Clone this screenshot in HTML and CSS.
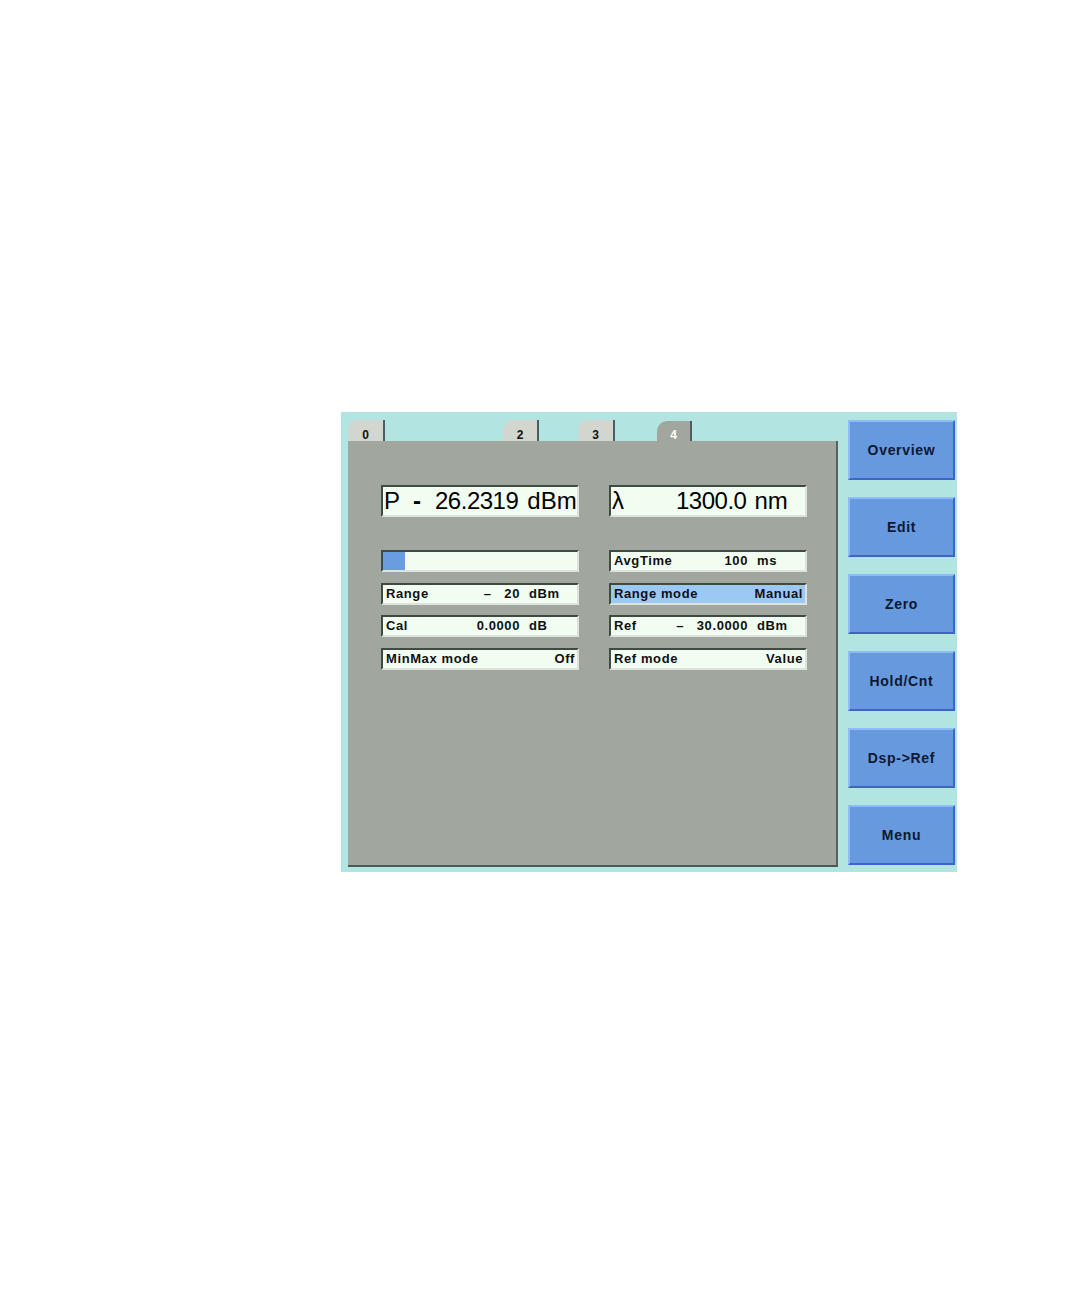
FILE: index.html
```html
<!DOCTYPE html>
<html>
<head>
<meta charset="utf-8">
<link rel="stylesheet" href="styles.css">
</head>
<body>
<div class="page">
  <div class="frame">
    <div class="left">
      <div class="tabs">
        <div class="tab t0">0</div>
        <div class="tab t2">2</div>
        <div class="tab t3">3</div>
        <div class="tab t4 active">4</div>
      </div>
      <div class="panel">
        <div class="big-row">
          <div class="box big"><span>P</span><span class="minus">-</span><span class="num">26.2319</span><span class="unit">dBm</span></div>
          <div class="box big"><span>λ</span><span class="lnum">1300.0</span><span class="unit2">nm</span></div>
        </div>
        <div class="grid">
          <div class="box row bar"><div class="fill"></div></div>
          <div class="box row"><span class="lab">AvgTime</span><span class="v">100</span><span class="u">ms</span></div>
          <div class="box row"><span class="lab">Range</span><span class="v">–&nbsp;&nbsp;&nbsp;20</span><span class="u">dBm</span></div>
          <div class="box row sel single"><span class="lab">Range mode</span><span class="v">Manual</span></div>
          <div class="box row"><span class="lab">Cal</span><span class="v">0.0000</span><span class="u">dB</span></div>
          <div class="box row"><span class="lab">Ref</span><span class="v">–&nbsp;&nbsp;&nbsp;30.0000</span><span class="u">dBm</span></div>
          <div class="box row single"><span class="lab">MinMax mode</span><span class="v">Off</span></div>
          <div class="box row single"><span class="lab">Ref mode</span><span class="v">Value</span></div>
        </div>
      </div>
    </div>
    <div class="buttons">
      <div class="btn">Overview</div>
      <div class="btn">Edit</div>
      <div class="btn">Zero</div>
      <div class="btn">Hold/Cnt</div>
      <div class="btn">Dsp-&gt;Ref</div>
      <div class="btn">Menu</div>
    </div>
  </div>
</div>
</body>
</html>
```
FILE: styles.css
```css
body {
  margin: 0;
  background: #ffffff;
  font-family: "Liberation Sans", Arial, sans-serif;
  color: #111;
}
.page {
  padding: 412px 0 0 341px;
}
.frame {
  width: 616px;
  height: 460px;
  box-sizing: border-box;
  padding: 8px 2px 5px 7px;
  background: #b2e4e2;
  display: flex;
  gap: 10px;
}
.left {
  width: 490px;
  display: flex;
  flex-direction: column;
}
.tabs {
  height: 21px;
  display: flex;
  align-items: flex-end;
  flex: none;
}
.tab {
  height: 21px;
  width: 37px;
  box-sizing: border-box;
  background: #d2d6ce;
  border-right: 2px solid #4e5c5c;
  border-top-left-radius: 10px;
  font-size: 12px;
  line-height: 11px;
  font-weight: bold;
  display: flex;
  align-items: flex-end;
  justify-content: center;
  padding-bottom: 0;
  color: #111;
}
.t2 { margin-left: 118px; width: 36px; }
.t3 { margin-left: 39px; }
.t4 { margin-left: 42px; width: 35px; }
.tab.active {
  background: #a1a69e;
  color: #ffffff;
  height: 20px;
}
.panel {
  flex: 1;
  background: #a1a69e;
  border-right: 2px solid #56625a;
  border-bottom: 2px solid #4b5a52;
  padding: 44px 0 0 33px;
}
.box {
  box-sizing: border-box;
  width: 198px;
  background: #f1fdf1;
  border-top: 2px solid #3e4a42;
  border-left: 2px solid #3e4a42;
  border-bottom: 2px solid #dde2da;
  border-right: 2px solid #dde2da;
}
.big-row {
  display: flex;
  gap: 30px;
  margin-bottom: 33px;
}
.big {
  height: 32px;
  display: flex;
  align-items: center;
  font-size: 24px;
  line-height: 28px;
  padding-left: 1px;
  color: #000;
}
.minus { margin-left: 13px; font-weight: bold; }
.num { margin-left: 14px; letter-spacing: -0.5px; }
.unit { margin-left: 9px; }
.lnum { margin-left: 52px; letter-spacing: -0.5px; }
.unit2 { margin-left: 8px; }
.grid {
  display: grid;
  grid-template-columns: 198px 198px;
  column-gap: 30px;
  row-gap: 10.5px;
}
.row {
  height: 22px;
  display: grid;
  grid-template-columns: 1fr auto 57px;
  align-items: center;
  font-size: 13px;
  font-weight: bold;
  letter-spacing: 0.6px;
  line-height: 18px;
  color: #101010;
  white-space: nowrap;
}
.lab { padding-left: 3px; }
.v { text-align: right; }
.u { padding-left: 9px; }
.row.single {
  display: flex;
  justify-content: space-between;
  padding-right: 2px;
}
.row.sel {
  background: #9cc8f6;
}
.bar {
  display: block;
}
.fill {
  width: 22px;
  height: 18px;
  background: #6a9de0;
}
.buttons {
  display: flex;
  flex-direction: column;
  gap: 17px;
}
.btn {
  width: 107px;
  height: 60px;
  box-sizing: border-box;
  background: #6699dd;
  border-top: 2px solid #8ebcf8;
  border-left: 2px solid #8ebcf8;
  border-bottom: 2px solid #3f62cc;
  border-right: 2px solid #3f62cc;
  display: flex;
  align-items: center;
  justify-content: center;
  font-size: 14px;
  font-weight: bold;
  letter-spacing: 0.7px;
  color: #0e1830;
}
```
